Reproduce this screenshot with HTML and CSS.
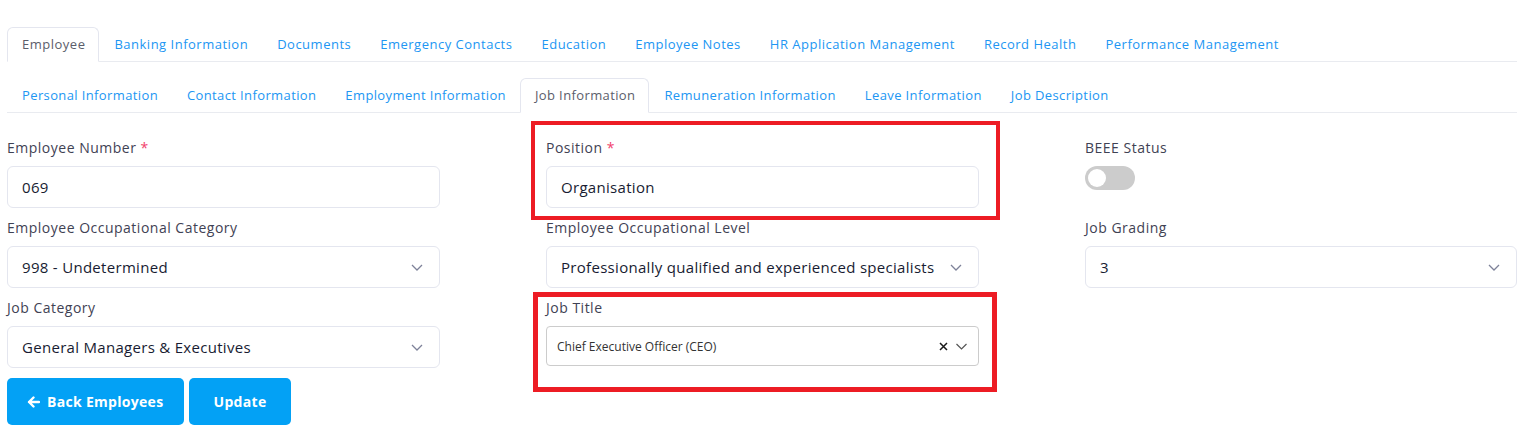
FILE: index.html
```html
<!DOCTYPE html>
<html lang="en">
<head>
<meta charset="utf-8">
<title>Employee - Job Information</title>
<link rel="stylesheet" href="styles.css">
</head>
<body>
<div class="page">
  <nav class="tabs tabs-main">
    <a class="tab active">Employee</a>
    <a class="tab">Banking Information</a>
    <a class="tab">Documents</a>
    <a class="tab">Emergency Contacts</a>
    <a class="tab">Education</a>
    <a class="tab">Employee Notes</a>
    <a class="tab">HR Application Management</a>
    <a class="tab">Record Health</a>
    <a class="tab">Performance Management</a>
  </nav>
  <nav class="tabs tabs-sub">
    <a class="tab">Personal Information</a>
    <a class="tab">Contact Information</a>
    <a class="tab">Employment Information</a>
    <a class="tab active">Job Information</a>
    <a class="tab">Remuneration Information</a>
    <a class="tab">Leave Information</a>
    <a class="tab">Job Description</a>
  </nav>

  <form class="form-grid">
    <div class="col">
      <div class="field">
        <label class="label">Employee Number <span class="req">*</span></label>
        <div class="control">069</div>
      </div>
      <div class="field">
        <label class="label">Employee Occupational Category</label>
        <div class="control select">
          <span class="value">998 - Undetermined</span>
          <svg class="chev" width="12" height="7" viewBox="0 0 12 7"><polyline points="1,1 6,6 11,1" fill="none" stroke="#7e8299" stroke-width="1.3"/></svg>
        </div>
      </div>
      <div class="field">
        <label class="label">Job Category</label>
        <div class="control select">
          <span class="value">General Managers &amp; Executives</span>
          <svg class="chev" width="12" height="7" viewBox="0 0 12 7"><polyline points="1,1 6,6 11,1" fill="none" stroke="#7e8299" stroke-width="1.3"/></svg>
        </div>
      </div>
      <div class="actions">
        <button type="button" class="btn btn-back">
          <svg width="13" height="12" viewBox="0 0 13 12"><path d="M12 6H2M6.5 1.5L2 6l4.5 4.5" fill="none" stroke="#fff" stroke-width="2.4" stroke-linecap="round" stroke-linejoin="round"/></svg>
          Back Employees
        </button>
        <button type="button" class="btn btn-update">Update</button>
      </div>
    </div>

    <div class="col">
      <div class="field">
        <span class="mark mark-1"></span>
        <label class="label">Position <span class="req">*</span></label>
        <div class="control">Organisation</div>
      </div>
      <div class="field">
        <label class="label">Employee Occupational Level</label>
        <div class="control select">
          <span class="value">Professionally qualified and experienced specialists and mid-management</span>
          <svg class="chev" width="12" height="7" viewBox="0 0 12 7"><polyline points="1,1 6,6 11,1" fill="none" stroke="#7e8299" stroke-width="1.3"/></svg>
        </div>
      </div>
      <div class="field">
        <span class="mark mark-2"></span>
        <label class="label">Job Title</label>
        <div class="rselect">
          <span class="rvalue">Chief Executive Officer (CEO)</span>
          <span class="rind">
            <svg width="9" height="9" viewBox="0 0 9 9"><path d="M1 1l7 7M8 1l-7 7" stroke="#1a1a1a" stroke-width="1.5"/></svg>
            <svg width="11" height="7" viewBox="0 0 11 7"><polyline points="0.5,1 5.5,6 10.5,1" fill="none" stroke="#555" stroke-width="1.2"/></svg>
          </span>
        </div>
      </div>
    </div>

    <div class="col">
      <div class="field">
        <label class="label">BEEE Status</label>
        <div class="toggle-wrap"><span class="toggle"><span class="knob"></span></span></div>
      </div>
      <div class="field">
        <label class="label">Job Grading</label>
        <div class="control select">
          <span class="value">3</span>
          <svg class="chev" width="12" height="7" viewBox="0 0 12 7"><polyline points="1,1 6,6 11,1" fill="none" stroke="#7e8299" stroke-width="1.3"/></svg>
        </div>
      </div>
    </div>
  </form>
</div>
</body>
</html>
```

FILE: styles.css
```css
* { box-sizing: border-box; }
html, body { margin: 0; background: #fff; }
body {
  font-family: "Open Sans", "Noto Sans", "Liberation Sans", sans-serif;
  color: #3f4254;
}
.page { padding: 27px 9px 0 7px; }

.tabs {
  display: flex;
  border-bottom: 1px solid #e9ebf0;
}
.tabs-sub { margin-top: 16px; }
.tab {
  display: block;
  padding: 6px 13px 7px 14px;
  font-size: 13px;
  line-height: 20px;
  color: #2196f3;
  border: 1px solid transparent;
  border-bottom: none;
  border-radius: 6px 6px 0 0;
  margin-bottom: -1px;
  white-space: nowrap;
  letter-spacing: 0.38px;
}
.tabs-main .tab { letter-spacing: 0.5px; }
.tab.active {
  color: #5b5d6b;
  border-color: #e4e6ef;
  background: #fff;
  border-bottom: 1px solid #fff;
}

.form-grid {
  display: grid;
  grid-template-columns: 433px 433px 432px;
  column-gap: 106px;
  margin-top: 25px;
}
.col { display: flex; flex-direction: column; }
.field { margin-bottom: 10px; position: relative; }
.label {
  display: block;
  font-size: 14px;
  line-height: 20px;
  margin-bottom: 8px;
  color: #3f4254;
  letter-spacing: 0.5px;
}
.req { color: #f1416c; }
.control {
  height: 42px;
  border: 1px solid #e4e6ef;
  border-radius: 6px;
  padding: 0 14px;
  display: flex;
  align-items: center;
  font-size: 15px;
  letter-spacing: 0.3px;
  color: #181c32;
}
.select { justify-content: space-between; }
.value {
  overflow: hidden;
  white-space: nowrap;
  flex: 1;
  min-width: 0;
}
.chev { flex: none; margin-left: 12px; margin-right: 2px; }

.rselect {
  height: 40px;
  border: 1px solid #cccccc;
  border-radius: 4px;
  display: flex;
  align-items: center;
  padding: 0 11px 0 10px;
  font-size: 12px;
  color: #333;
}
.rvalue { flex: 1; }
.rind { display: flex; align-items: center; gap: 8px; }

.toggle-wrap { height: 42px; }
.toggle {
  display: block;
  width: 50px;
  height: 24px;
  border-radius: 12px;
  background: #cccccc;
  position: relative;
}
.knob {
  position: absolute;
  left: 3px;
  top: 3px;
  width: 18px;
  height: 18px;
  border-radius: 50%;
  background: #fff;
}

.actions { display: flex; gap: 5px; }
.btn {
  height: 47px;
  border: none;
  border-radius: 5px;
  background: #03a1f5;
  color: #fff;
  font-family: inherit;
  font-size: 14px;
  font-weight: 700;
  letter-spacing: 0.3px;
  display: flex;
  align-items: center;
  gap: 7px;
}
.btn-back { width: 177px; padding: 0 20px; }
.btn-update { width: 102px; justify-content: center; }

.mark {
  position: absolute;
  border: 4px solid #ed1c24;
  pointer-events: none;
}
.mark-1 { left: -15px; top: -17px; width: 469px; height: 99px; }
.mark-2 { left: -13px; top: -6px; width: 464px; height: 100px; border-width: 5px; }
```
